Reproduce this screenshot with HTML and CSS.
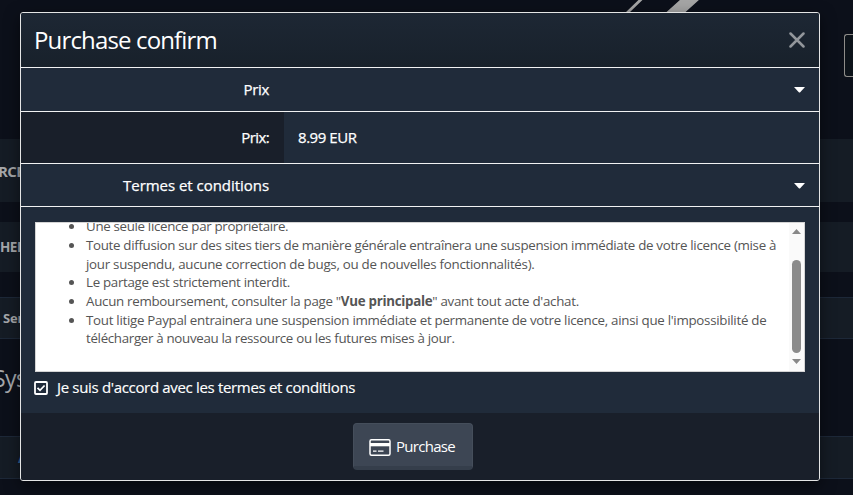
FILE: index.html
```html
<!DOCTYPE html>
<html lang="fr">
<head>
<meta charset="utf-8">
<title>Purchase confirm</title>
<link rel="stylesheet" href="styles.css">
</head>
<body>
<div class="page">
  <header class="page-top">
    <svg class="slashes" width="80" height="14" viewBox="0 0 80 14"><path d="M5.5 12.5 19.5-1h4L9.500 12.5zM46 12.5 61-1h19L65 12.5z"/></svg>
    <span class="page-button"></span>
  </header>
  <div class="band band-nav"><span class="nav-text">RCE</span></div>
  <div class="band band-search"><span class="search-text">HER</span></div>
  <div class="band band-line band-server"><span class="server-text">Ser</span></div>
  <div class="page-heading">Sys</div>
  <div class="band band-line band-last"><span class="last-text">A</span></div>
</div>
<main class="modal">
  <header class="modal-header">
    <h1>Purchase confirm</h1>
    <svg class="close" width="16" height="16" viewBox="0 0 16 16"><path d="M1.5 1.5 14.5 14.5M14.5 1.5 1.5 14.5"/></svg>
  </header>
  <div class="section"><span class="label"><span class="t-prix">Prix</span></span><svg class="caret" width="11" height="6" viewBox="0 0 11 6"><path d="M0 0h11L6.2 5.2q-.7.6-1.4 0z"/></svg></div>
  <div class="price-row"><span class="label"><span class="t-prix2">Prix:</span></span><span class="price">8.99 EUR</span></div>
  <div class="section terms-section"><span class="label"><span class="t-terms">Termes et conditions</span></span><svg class="caret" width="11" height="6" viewBox="0 0 11 6"><path d="M0 0h11L6.2 5.2q-.7.6-1.4 0z"/></svg></div>
  <div class="modal-body">
    <div class="terms">
      <ul>
        <li><span class="l1">Une seule licence par propriétaire.</span></li>
        <li><span class="l2">Toute diffusion sur des sites tiers de manière générale entraînera une suspension immédiate de votre licence (mise à</span><br><span class="l3">jour suspendu, aucune correction de bugs, ou de nouvelles fonctionnalités).</span></li>
        <li><span class="l4">Le partage est strictement interdit.</span></li>
        <li><span class="l5">Aucun remboursement, consulter la page "<b>Vue principale</b>" avant tout acte d'achat.</span></li>
        <li><span class="l6">Tout litige Paypal entrainera une suspension immédiate et permanente de votre licence, ainsi que l'impossibilité de</span><br><span class="l7">télécharger à nouveau la ressource ou les futures mises à jour.</span></li>
      </ul>
      <div class="scrollbar">
        <svg width="9" height="5" viewBox="0 0 9 5"><path d="M0 5 4.5 0 9 5z"/></svg>
        <span class="thumb"></span>
        <svg width="9" height="5" viewBox="0 0 9 5"><path d="M0 0h9L4.5 5z"/></svg>
      </div>
    </div>
    <div class="agree">
      <svg width="14" height="14" viewBox="0 0 14 14"><rect x="1" y="1" width="12" height="12" rx="1"/><path d="M3.5 6.8 6 9.3 10.6 4.5"/></svg>
      <span class="t-agree">Je suis d'accord avec les termes et conditions</span>
    </div>
  </div>
  <footer class="modal-footer">
    <button class="purchase" type="button">
      <svg width="22" height="17" viewBox="0 0 22 17"><rect class="card" x="1" y=".75" width="20" height="15.5" rx="1.5"/><path class="stripe" d="M1 4h20v3.3H1z"/><path class="dash" d="M4 12.2h3.5M9 12.2h5.5"/></svg>
      <span class="t-purchase">Purchase</span>
    </button>
  </footer>
</main>
</body>
</html>
```
FILE: styles.css
```css
* { box-sizing: border-box; }
body {
  margin: 0;
  height: 495px;
  overflow: hidden;
  background: #0c101a;
  color: #fff;
  font: 15px/20px "Open Sans", "Noto Sans", sans-serif;
}
svg { display: block; flex: none; }
.page {
  position: absolute;
  inset: 0;
  overflow: hidden;
  color: #a5a7aa;
}
.page-top { display: flex; justify-content: space-between; height: 139px; padding-left: 620px; }
.slashes { fill: #a5a5a5; }
.page-button {
  width: 9px;
  height: 43px;
  margin-top: 34px;
  border: 1px solid #8f8d8a;
  border-right: 0;
  border-radius: 3px 0 0 3px;
  background: #0d131a;
}
.band { display: flex; align-items: center; background: #151c25; font-weight: 700; white-space: nowrap; }
.band-nav { height: 63px; margin-bottom: 20px; }
.band-search { height: 50px; margin-bottom: 25px; }
.band-line { border: solid #1d2838; border-width: 1px 0; }
.band-server { height: 42px; }
.band-last { height: 43px; color: #2f6597; }
.nav-text { margin-left: -2px; letter-spacing: -.6px; }
.search-text { font-size: 13.5px; letter-spacing: -.5px; }
.server-text { margin-left: 3px; font-size: 13px; letter-spacing: -.2px; }
.last-text { margin-left: 18px; font-size: 14px; }
.page-heading { height: 97px; padding-top: 24px; margin-left: -7px; font-size: 23px; line-height: 30px; letter-spacing: -.6px; }
.modal {
  position: relative;
  display: flex;
  flex-direction: column;
  width: 800px;
  height: 469px;
  margin: 12px 0 0 20px;
  border: 1px solid #e4e5e5;
  border-radius: 3px;
  background: #202b3a;
  box-shadow: 0 5px 15px rgba(0, 0, 0, .5);
  overflow: hidden;
}
.modal-header {
  display: flex;
  align-items: center;
  justify-content: space-between;
  height: 55px;
  padding: 0 14px 0 13px;
  border-bottom: 1px solid #f1f2f3;
  background: linear-gradient(#1d2734, #18212b);
}
h1 { margin: 0; font-size: 24px; line-height: 30px; font-weight: 400; letter-spacing: -.85px; }
.close { stroke: #92969b; stroke-width: 2.5; stroke-linecap: round; }
.section {
  display: flex;
  align-items: center;
  justify-content: space-between;
  height: 44px;
  padding-right: 14px;
  border-bottom: 1px solid #f1f2f3;
}
.terms-section { height: 43px; padding-top: 1px; }
.label { width: 263px; padding-right: 15px; text-align: right; white-space: nowrap; -webkit-text-stroke: .25px; }
.section .label { padding-bottom: 2px; }
.caret { fill: #fff; }
.price-row { display: flex; height: 52px; border-bottom: 1px solid #f1f2f3; line-height: 51px; }
.price-row .label { background: #191f2a; }
.price { padding-left: 14px; letter-spacing: -.45px; -webkit-text-stroke: .25px; }
.t-prix { letter-spacing: -.3px; }
.t-prix2 { letter-spacing: -.6px; }
.t-terms { letter-spacing: -.04px; }
.modal-body { height: 206px; padding: 15px 14px 0; }
.terms {
  display: flex;
  justify-content: space-between;
  height: 150px;
  border: 1px solid #d4d4d4;
  background: #fff;
  color: #555;
  font-size: 13.33px;
  line-height: 18.67px;
  overflow: hidden;
}
ul { margin: -5.8px 0 0; padding-left: 50px; white-space: nowrap; list-style: none; }
li::before {
  content: "";
  float: left;
  width: 5px;
  height: 5px;
  margin: 7px 0 0 -17px;
  border-radius: 50%;
  background: #555;
}
.l1 { letter-spacing: -.33px; }
.l2 { letter-spacing: -.31px; }
.l3 { letter-spacing: -.28px; }
.l4 { letter-spacing: -.31px; }
.l5, .l6 { letter-spacing: -.285px; }
.l7 { letter-spacing: -.32px; }
.scrollbar {
  display: flex;
  flex: none;
  flex-direction: column;
  align-items: center;
  width: 15px;
  padding-top: 6px;
  background: #fafafa;
  fill: #888;
}
.thumb { width: 9px; height: 93px; margin: 26px 0 6px; border-radius: 5px; background: #8b8b8b; }
.agree { display: flex; align-items: center; gap: 9px; height: 31px; -webkit-text-stroke: .15px; }
.agree svg { margin-left: -1px; fill: none; stroke: #fff; stroke-width: 1.8; }
.t-agree { padding-bottom: 2px; letter-spacing: -.33px; }
.modal-footer { display: flex; justify-content: center; height: 67px; padding: 10px 14px 0 0; background: #191f2a; }
.purchase {
  display: flex;
  align-items: center;
  gap: 5px;
  width: 120px;
  height: 47px;
  padding: 0 0 0 15px;
  border: 1px solid #454e5b;
  border-bottom: 4px solid #353e4b;
  border-radius: 4px;
  background: #3d4654;
  color: #fff;
  font: inherit;
}
.purchase svg { margin-top: 4px; }
.t-purchase { margin-top: 1px; letter-spacing: -.7px; }
.card { fill: none; stroke: #fff; stroke-width: 1.5; }
.stripe { fill: #fff; }
.dash { stroke: #fff; stroke-width: 1.3; }
```
